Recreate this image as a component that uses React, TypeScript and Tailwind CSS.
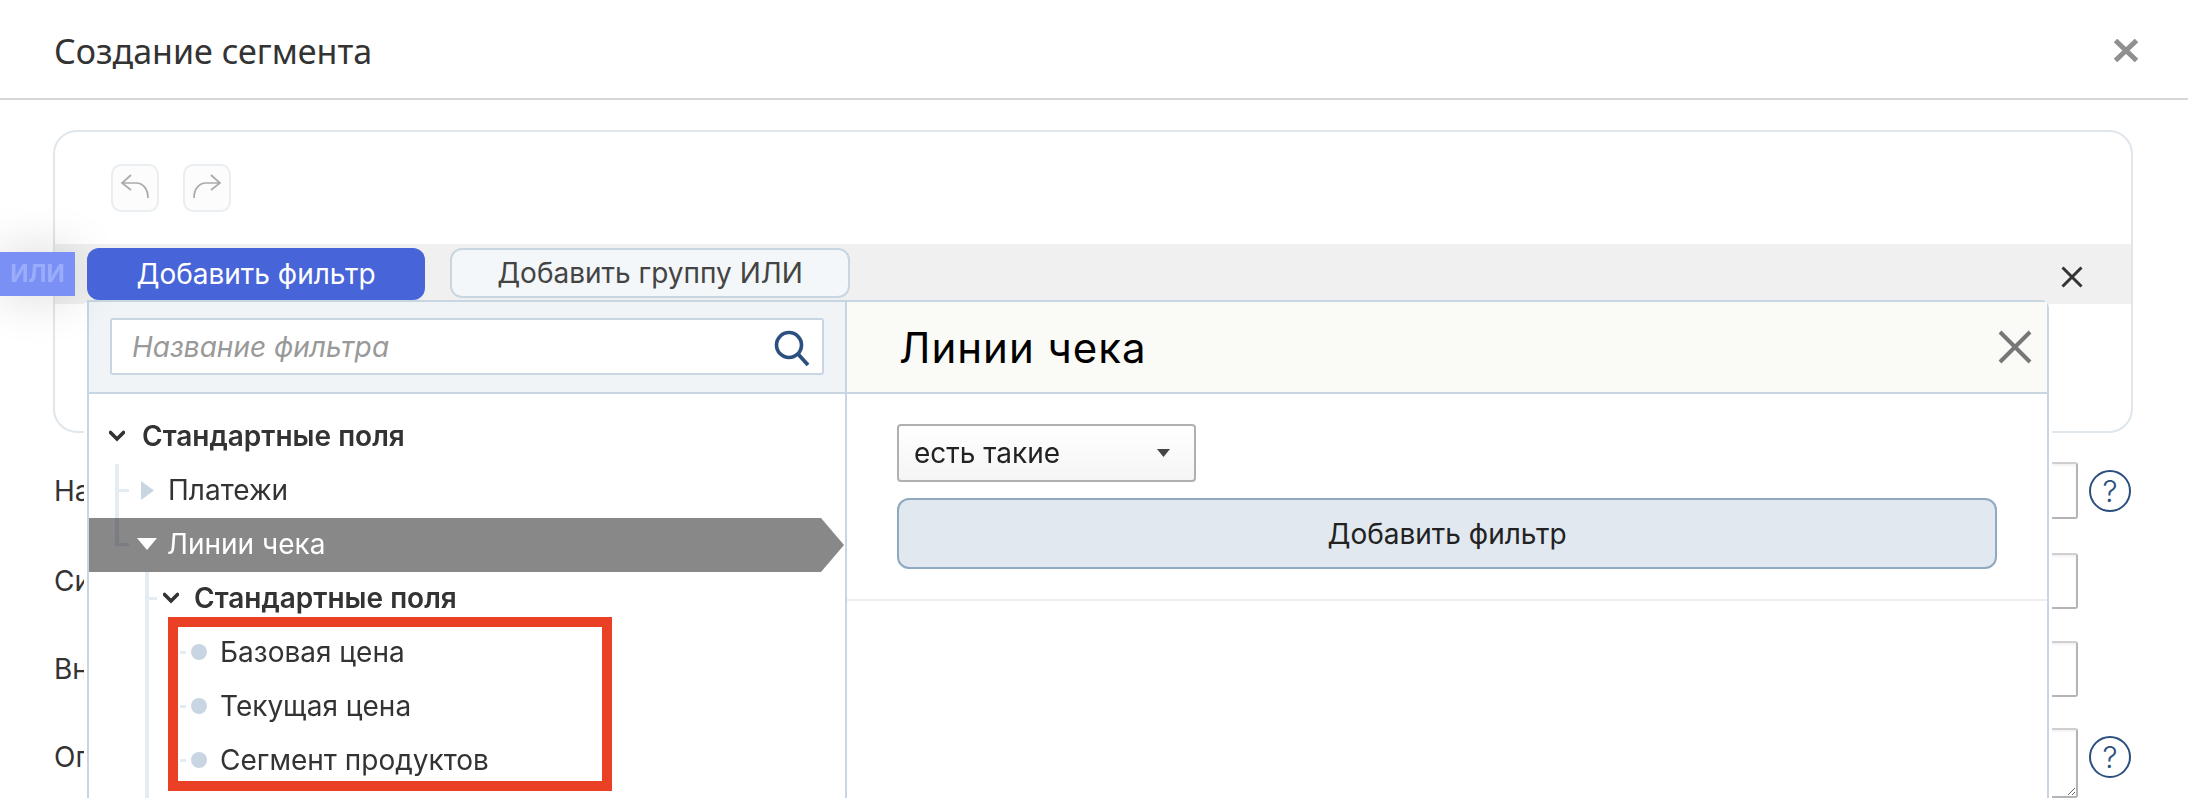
const formRows = [
  { label: 'На', rowClass: 'h-[57px] mt-[29px]', help: true },
  { label: 'Си', rowClass: 'h-[56px] mt-[34px]', help: false },
  { label: 'Вн', rowClass: 'h-[56px] mt-[32px]', help: false },
];

const items = ['Базовая цена', 'Текущая цена', 'Сегмент продуктов'];

function Help() {
  return (
    <div className="ml-[11px] mr-[2px] w-[42px] h-[42px] shrink-0 rounded-[50%] border-2 border-[#2b4f7e] flex items-center justify-center text-[30px] font-light leading-none text-[#2b4f7e]">
      ?
    </div>
  );
}

function Chevron() {
  return (
    <svg width="16" height="12" viewBox="0 0 16 12" className="shrink-0">
      <path d="M1.5 2.5 L8 9 L14.5 2.5" fill="none" stroke="#333" strokeWidth="3.6" strokeLinecap="round" />
    </svg>
  );
}

function HistoryButton({ flip }: { flip?: boolean }) {
  return (
    <button className="w-[48px] h-[48px] rounded-[10px] border-2 border-[#e8eef1] bg-[#fbfcfb] flex items-center justify-center">
      <svg width="48" height="48" viewBox="0 0 48 48" className={`shrink-0 ${flip ? '-scale-x-100' : ''}`}>
        <path d="M20 11 L11 19 L20 26 M11 19 H25 C32 19 37 25 37 34" fill="none" stroke="#aaa" strokeWidth="1.7" />
      </svg>
    </button>
  );
}

export default function App() {
  return (
    <div className="relative h-[798px] overflow-hidden bg-white font-[Inter,'Noto_Sans',sans-serif]">
      {/* Header */}
      <div className="h-[100px] border-b-2 border-[#d6d6d6] pl-[54px] pr-[50px] pt-[5px] flex items-center justify-between">
        <h1 className="text-[34px] font-normal font-['Noto_Sans',sans-serif] text-[#333]">Создание сегмента</h1>
        <svg width="24" height="23" viewBox="0 0 24 23" className="mt-[-3px]">
          <path d="M1.5 1.5 L22.5 21.5 M22.5 1.5 L1.5 21.5" stroke="#909090" strokeWidth="5" />
        </svg>
      </div>

      <div className="pl-[53px] pr-[55px] pt-[30px]">
        {/* Filter card */}
        <div className="h-[303px] rounded-[24px] border-2 border-[#dfe6ec] pt-[32px]">
          <div className="flex gap-[24px] pl-[56px]">
            <HistoryButton />
            <HistoryButton flip />
          </div>

          <div className="relative mt-[32px] h-[60px] bg-[#f0f0f0] flex items-start pt-[4px] pl-[32px]">
            <div className="absolute left-[-55px] top-[8px] z-20 w-[75px] h-[44px] bg-[#7b90f5] shadow-[0_0_50px_rgba(0,0,0,0.16)] flex items-center justify-center text-[24px] font-bold text-[#9bacfa]">
              ИЛИ
            </div>
            <button className="relative z-20 w-[338px] h-[52px] rounded-[12px] bg-[#4764d8] text-[28px] text-white">Добавить фильтр</button>
            <button className="relative z-20 ml-[25px] w-[400px] h-[50px] rounded-[12px] border-2 border-[#c8d6e2] bg-[#f4f7f9] text-[28px] text-[#444]">
              Добавить группу ИЛИ
            </button>
            <svg width="22" height="22" viewBox="0 0 22 22" className="ml-auto mr-[48px] mt-[18px]">
              <path d="M1.5 1.5 L20.5 20.5 M20.5 1.5 L1.5 20.5" stroke="#333" strokeWidth="3" />
            </svg>

            {/* Dropdown */}
            <div className="absolute left-[32px] top-[56px] z-10 w-[1962px] h-[600px] bg-white border-2 border-[#c8d6e3] rounded-tr-[8px] shadow-[-3px_3px_0_#fff,3px_3px_0_#fff] grid grid-cols-[758px_1fr]">
              <div className="border-r-2 border-[#c8d6e3]">
                <div className="h-[92px] bg-[#f0f4f7] border-b-2 border-[#c8d6e3] pt-[16px] pl-[21px]">
                  <div className="w-[714px] h-[57px] bg-white border-2 border-[#c8d6e3] rounded-[3px] flex items-center justify-between pl-[20px] pr-[10px]">
                    <span className="text-[28px] italic text-[#999]">Название фильтра</span>
                    <svg width="40" height="40" viewBox="0 0 40 40">
                      <circle cx="17" cy="18" r="12.5" fill="none" stroke="#2b4f7e" strokeWidth="3.6" />
                      <path d="M26 27 L36 38" stroke="#2b4f7e" strokeWidth="3.8" />
                    </svg>
                  </div>
                </div>

                {/* Tree */}
                <div className="relative pt-[16px]">
                  <div className="absolute left-[26px] top-[70px] z-10 w-[4px] h-[82px] bg-[#e4ebf1] mix-blend-multiply" />
                  <div className="absolute left-[30px] top-[95px] w-[10px] h-[3px] bg-[#e4ebf1]" />
                  <div className="absolute left-[30px] top-[149px] z-10 w-[10px] h-[3px] bg-[#e4ebf1] mix-blend-multiply" />
                  <div className="absolute left-[56px] top-[178px] w-[4px] h-[260px] bg-[#e4ebf1]" />
                  <div className="absolute left-[60px] top-[203px] w-[8px] h-[3px] bg-[#e4ebf1]" />

                  <div className="h-[54px] pb-[2px] flex items-center pl-[20px] gap-[17px] text-[28px] font-semibold text-[#333]">
                    <Chevron />
                    Стандартные поля
                  </div>
                  <div className="h-[54px] pb-[2px] flex items-center pl-[52px] text-[28px] text-[#333]">
                    <svg width="13" height="19" viewBox="0 0 13 19" className="mr-[14px]">
                      <path d="M0 0 L13 9.5 L0 19 Z" fill="#c8d6e3" />
                    </svg>
                    Платежи
                  </div>
                  <div className="h-[54px] pb-[2px] w-[756px] flex items-center pl-[48px] bg-[#888] text-[28px] text-white [clip-path:polygon(0_0,732px_0,755px_50%,732px_100%,0_100%)]">
                    <svg width="20" height="12" viewBox="0 0 20 12" className="mr-[10px]">
                      <path d="M0 0 H20 L10 12 Z" fill="#fff" />
                    </svg>
                    Линии чека
                  </div>
                  <div className="h-[54px] pb-[2px] flex items-center pl-[74px] gap-[15px] text-[28px] font-semibold text-[#333]">
                    <Chevron />
                    Стандартные поля
                  </div>

                  <div className="relative pl-[102px]">
                    <div className="absolute left-[79px] top-[-9px] z-10 w-[444px] h-[174px] border-[10px] border-[#ea4025]" />
                    {items.map((item) => (
                      <div key={item} className="relative h-[54px] pb-[2px] flex items-center text-[28px] text-[#333]">
                        <div className="absolute left-[-11px] w-[6px] h-[3px] bg-[#e4ebf1]" />
                        <div className="w-[16px] h-[16px] rounded-full bg-[#c8d6e3] mr-[13px]" />
                        {item}
                      </div>
                    ))}
                  </div>
                </div>
              </div>

              <div>
                <div className="h-[92px] bg-[#fafbf7] border-b-2 border-[#c8d6e3] flex items-center justify-between pl-[52px] pr-[15px]">
                  <span className="text-[42px] tracking-[1px] text-black">Линии чека</span>
                  <svg width="34" height="34" viewBox="0 0 34 34">
                    <path d="M2 2 L32 32 M32 2 L2 32" stroke="#777" strokeWidth="4" />
                  </svg>
                </div>
                <div className="border-b-2 border-[#eee] pl-[50px] pt-[30px] pb-[30px]">
                  <div className="w-[299px] h-[58px] rounded-[4px] border-2 border-[#b0b0b0] bg-gradient-to-b from-white to-[#f5f5f5] flex items-center justify-between pl-[15px] pr-[24px] text-[28px] text-[#222]">
                    есть такие
                    <svg width="13" height="8" viewBox="0 0 13 8">
                      <path d="M0 0 H13 L6.5 8 Z" fill="#444" />
                    </svg>
                  </div>
                  <button className="mt-[16px] w-[1100px] h-[71px] rounded-[12px] border-2 border-[#8ea9c0] bg-[#e1e8ef] text-[28px] text-[#222]">
                    Добавить фильтр
                  </button>
                </div>
              </div>
            </div>
          </div>
        </div>

        {/* Form */}
        {formRows.map((row) => (
          <div key={row.label} className={`flex items-center pl-px ${row.rowClass}`}>
            <div className="whitespace-nowrap text-[28px] text-[#333]">{row.label}</div>
            <div className="ml-auto w-[1178px] h-full rounded-[3px] border-2 border-[#b4b4b8] border-t-[#cfcfd2] shadow-[inset_0_2px_2px_rgba(0,0,0,0.05)]" />
            {row.help ? <Help /> : <div className="ml-[11px] mr-[2px] w-[42px] h-[42px] shrink-0" />}
          </div>
        ))}
        <div className="flex items-start pl-px mt-[31px]">
          <div className="mt-[8px] whitespace-nowrap text-[28px] text-[#333]">Оп</div>
          <textarea className="ml-auto block w-[1178px] h-[70px] rounded-[3px] border-2 border-[#b4b4b8] border-t-[#cfcfd2] shadow-[inset_0_2px_2px_rgba(0,0,0,0.05)]" />
          <div className="mt-[8px]">
            <Help />
          </div>
        </div>
      </div>
    </div>
  );
}
